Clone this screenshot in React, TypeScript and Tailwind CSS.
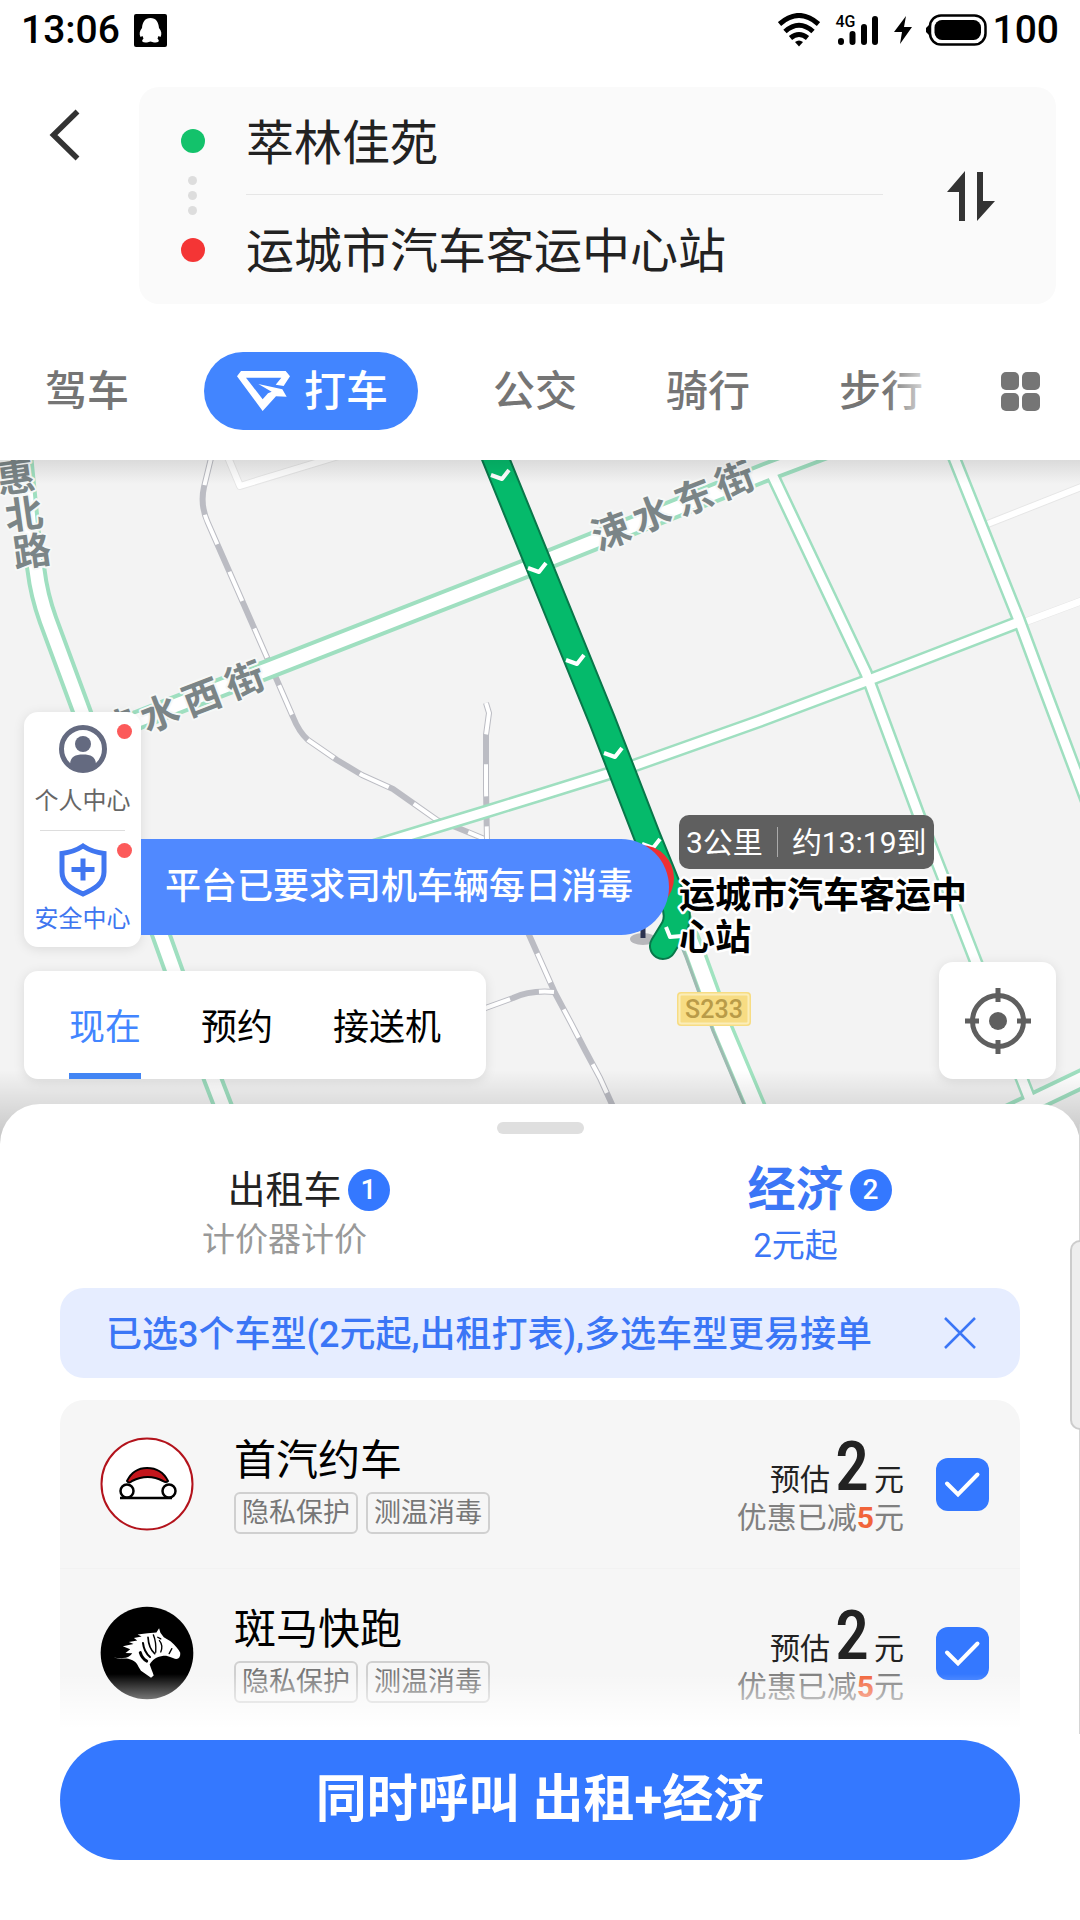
import React, { useState } from "react";

const travelModes = ["驾车", "打车", "公交", "骑行", "步行"];
const timeModes = ["现在", "预约", "接送机"];

// Route arrows painted on top of the green line
const routeArrows = [
  [500, 19],
  [537, 112],
  [575, 204],
  [613, 297],
  [651, 388],
];

const railPaths = [
  "M212 -6L204 27C201 40 203 52 208 63L255 170L276 218L293 257Q299 272 308 280L337 300L362 315L393 329L437 360L458 368L487 380",
  "M486 243L489 253L486 275L486 330L487 380",
  "M487 380L530 477L555 533L571 563L585 590L600 618L630 684",
  "M480 550L513 538Q530 530 554 532",
];

const mainRoads = [
  "M22 -10L30 70L36 110Q39 135 48 160L82 252L161 475L213 620L240 690",
  "M90 280L138 260L269 209L527 108L764 13L830 -12",
  "M996 660L1090 615",
];

const sideRoads = [
  "M770 10L866 213L918 353L943 417L976 502L1034 650",
  "M953 -5L1019 160L1045 230L1092 355",
  "M360 390L485 352L540 335L633 306L760 261L869 220L1019 162",
];

const routePath = "M488 -20L602 260L647 376L673 440Q680 456 674 468L663 486";

function WifiIcon() {
  return (
    <svg width="42" height="34" viewBox="0 0 42 34" fill="none" stroke="black" strokeWidth="5">
      <path d="M1.500 11Q21 -6 40.500 11" />
      <path d="M7 18.500Q21 6 35 18.500" />
      <path d="M12.500 25Q21 18 29.500 25" />
      <path d="M17 29Q21 26 25 29L21 33.500Z" fill="black" stroke="none" />
    </svg>
  );
}

function StatusBar() {
  return (
    <div className="flex h-[60px] items-center justify-between pl-[21px] pr-[21px] text-[39px] font-medium leading-none text-black">
      <div className="flex items-center gap-[14px]">
        <span>13:06</span>
        <svg width="33" height="33" viewBox="0 0 33 33">
          <rect width="33" height="33" rx="2" />
          <path
            d="M16.500 4C22 4 24.500 8 25 14C27.500 17 28 20 26.500 23L24.500 22L23.500 24.500C26 27 25 28.500 20 28.500L16.500 27.500L13 28.500C8 28.500 7 27 9.500 24.500L8.500 22L6.500 23C5 20 5.500 17 8 14C8.500 8 11 4 16.500 4Z"
            fill="white"
          />
        </svg>
      </div>
      <div className="flex items-center">
        <WifiIcon />
        <div className="relative ml-4">
          <span className="absolute left-0 top-0 text-base leading-none">4G</span>
          <svg width="44" height="32" viewBox="0 0 44 32" stroke="black" strokeWidth="6" strokeLinecap="round">
            <path d="M5 27V28M16.500 20V28M28 13V28M39 5V28" />
          </svg>
        </div>
        <svg className="ml-3" width="22" height="28" viewBox="0 0 22 28">
          <path d="M14 0L2 16H10L8 28L20 11H12Z" />
        </svg>
        <svg className="ml-3" width="61" height="32" viewBox="0 0 61 32">
          <rect x="4" y="1.500" width="55.500" height="29" rx="11" fill="none" stroke="black" strokeWidth="2.500" />
          <rect x="8.500" y="6" width="46.500" height="20" rx="7.500" />
          <path d="M3 11V21L0 18V14Z" />
        </svg>
        <span className="ml-[6px]">100</span>
      </div>
    </div>
  );
}

function RouteHeader() {
  return (
    <div className="flex items-start pr-6 pt-[27px]">
      <button type="button" aria-label="返回" className="flex w-[139px] justify-start pl-[49px] pt-[22px]">
        <svg width="32" height="52" viewBox="0 0 32 52" fill="none" stroke="#333" strokeWidth="5.500">
          <path d="M28.500 2.500L4.500 26L28.500 49.500" />
        </svg>
      </button>
      <div className="flex flex-1 items-center rounded-[20px] bg-[#fafafa] pr-[61px] text-[48px] text-[#222]">
        <div className="flex w-[107px] flex-col items-center gap-3">
          <span className="size-6 rounded-full bg-[#13c26b]" />
          <div className="flex h-[61px] flex-col justify-center gap-[6px]">
            <span className="size-[9px] rounded-full bg-[#ddd]" />
            <span className="size-[9px] rounded-full bg-[#ddd]" />
            <span className="size-[9px] rounded-full bg-[#ddd]" />
          </div>
          <span className="size-6 rounded-full bg-[#f43535]" />
        </div>
        <div className="flex-1 divide-y divide-[#e6e6e6]">
          <p className="h-[108px] leading-[114px]">萃林佳苑</p>
          <p className="h-[109px] leading-[114px]">运城市汽车客运中心站</p>
        </div>
        <button type="button" aria-label="交换起终点" className="ml-16">
          <svg width="48" height="50" viewBox="0 0 48 50" fill="#333">
            <path d="M18 0V50H12V21H0Z" />
            <path d="M30 50V1H36V30H48Z" />
          </svg>
        </button>
      </div>
    </div>
  );
}

function TravelTabs() {
  const [mode, setMode] = useState("打车");

  return (
    <div className="flex items-center justify-between pb-[30px] pr-10 pt-12 text-[42px] font-medium text-[#757575]">
      <nav className="relative flex h-[78px] items-center gap-[89px] overflow-hidden pl-[45px]">
        {travelModes.map((name) =>
          name === mode ? (
            <button
              key={name}
              type="button"
              className="-mx-[14px] flex h-[78px] shrink-0 items-center gap-[14px] rounded-full bg-[#4285ff] pl-[33px] pr-[30px] text-white"
            >
              <svg width="53" height="40" viewBox="24 27 159 120" fill="white">
                <path d="M36 27H170L183 43L164 72L140 68L157 47H51L101 112L117 94L128 89L88 66L160 82L173 104L141 103L101 147L24 43Z" />
              </svg>
              {name}
            </button>
          ) : (
            <button key={name} type="button" className="shrink-0" onClick={() => setMode(name)}>
              {name}
            </button>
          )
        )}
        <div className="absolute right-0 h-full w-9 bg-linear-to-l from-white/70 to-white/0" />
      </nav>
      <button type="button" aria-label="更多" className="grid grid-cols-2 gap-[3px]">
        <span className="size-[18px] rounded-[5px] bg-[#757575]" />
        <span className="size-[18px] rounded-[5px] bg-[#757575]" />
        <span className="size-[18px] rounded-[5px] bg-[#757575]" />
        <span className="size-[18px] rounded-[5px] bg-[#757575]" />
      </button>
    </div>
  );
}

function RoadLabel({ x, y, angle, children }: { x: number; y: number; angle: number; children: string }) {
  return (
    <text
      x={x}
      y={y}
      transform={`rotate(${angle} ${x} ${y})`}
      textAnchor="middle"
      dominantBaseline="central"
      fontSize="38"
      fontWeight="700"
      fill="#7b8587"
      stroke="#f6f8f7"
      strokeWidth="4"
      paintOrder="stroke"
    >
      {children}
    </text>
  );
}

function MapCanvas() {
  return (
    <svg
      className="absolute inset-0 h-full w-full"
      viewBox="0 0 1080 684"
      preserveAspectRatio="xMidYMin slice"
      fill="none"
      strokeLinejoin="round"
    >
      <rect width="1080" height="684" fill="#f3f3f3" />

      {/* minor roads */}
      <g stroke="#e6e6e6" strokeWidth="8">
        <path d="M227 -5L240 26L345 -6M985 65L1084 26M1025 162L1084 140" />
      </g>
      <g stroke="white">
        <path d="M227 -5L240 26L345 -6M985 65L1084 26" strokeWidth="6" />
        <path d="M1025 162L1084 140" strokeWidth="7" />
      </g>

      {/* railway */}
      {railPaths.map((d) => (
        <g key={d}>
          <path d={d} stroke="#bbbcc3" strokeWidth="6" />
          <path d={d} stroke="white" strokeWidth="4" strokeDasharray="32 30" />
        </g>
      ))}

      {/* green roads */}
      {mainRoads.map((d) => (
        <path key={d} d={d} stroke="#9fdfc0" strokeWidth="21" />
      ))}
      {sideRoads.map((d) => (
        <path key={d} d={d} stroke="#9fdfc0" strokeWidth="14" />
      ))}
      <path d="M655 396L695 493L722 567L754 643L771 684" stroke="#a0e3c0" strokeWidth="22" />
      <path d="M646 400L686 497L713 571L745 647L762 688" stroke="#9dbbb1" strokeWidth="3" />
      {mainRoads.map((d) => (
        <path key={d} d={d} stroke="white" strokeWidth="13" />
      ))}
      {sideRoads.map((d) => (
        <path key={d} d={d} stroke="white" strokeWidth="9" />
      ))}
      <path d="M655 396L695 493L722 567L754 643L771 684" stroke="white" strokeWidth="15" />

      <RoadLabel x={16} y={18} angle={-8}>惠</RoadLabel>
      <RoadLabel x={24} y={55} angle={-8}>北</RoadLabel>
      <RoadLabel x={32} y={92} angle={-8}>路</RoadLabel>
      <RoadLabel x={118} y={269} angle={-21}>涑</RoadLabel>
      <RoadLabel x={160} y={254} angle={-21}>水</RoadLabel>
      <RoadLabel x={202} y={238} angle={-21}>西</RoadLabel>
      <RoadLabel x={245} y={221} angle={-21}>街</RoadLabel>
      <RoadLabel x={611} y={72} angle={-21}>涑</RoadLabel>
      <RoadLabel x={652} y={55} angle={-21}>水</RoadLabel>
      <RoadLabel x={694} y={38} angle={-21}>东</RoadLabel>
      <RoadLabel x={735} y={21} angle={-21}>街</RoadLabel>

      {/* destination pin, mostly behind the notice */}
      <ellipse cx="643" cy="479" rx="13" ry="6" fill="#b7b7bb" />
      <path d="M643 460V478" stroke="#2c3350" strokeWidth="5" />

      {/* route */}
      <g strokeLinecap="round">
        <path d={routePath} stroke="#08784a" strokeWidth="28" />
        <path d={routePath} stroke="#05ba6b" strokeWidth="24" />
      </g>
      <g stroke="white" strokeWidth="4">
        {routeArrows.map(([x, y]) => (
          <path key={y} d={`M${x - 9} ${y - 4}L${x + 2} ${y}L${x + 9} ${y - 9}`} />
        ))}
        <path d="M666 467L670 477L682 476" />
      </g>
      <circle cx="641" cy="418" r="33" fill="#ee2f33" />

      {/* road shield */}
      <rect x="677" y="532" width="74" height="34" rx="4" fill="#f7dc83" />
      <rect x="679.500" y="534.500" width="69" height="29" rx="2" stroke="#fbedb9" strokeWidth="2" />
      <text x="714" y="549" textAnchor="middle" dominantBaseline="central" fontSize="25" fontWeight="500" fill="#b99b48">
        S233
      </text>

      {/* destination name */}
      <g fontSize="36" fontWeight="700" fill="black" stroke="white" strokeWidth="5" paintOrder="stroke">
        <text x="679" y="448">运城市汽车客运中</text>
        <text x="679" y="490">心站</text>
      </g>
    </svg>
  );
}

function MapSection() {
  const [time, setTime] = useState("现在");

  return (
    <section className="relative h-[684px] overflow-hidden">
      <MapCanvas />
      <div className="absolute inset-x-0 top-0 h-6 bg-linear-to-b from-black/10 to-black/0" />
      <div className="absolute inset-x-0 bottom-0 h-[74px] bg-linear-to-t from-black/20 to-black/0" />

      {/* arrival estimate */}
      <div className="absolute left-[679px] top-[355px] flex h-[54px] items-center rounded-[10px] bg-[#5f5f5f] px-[7px] text-[30px] text-white">
        <span>3公里</span>
        <span className="mx-[14px] h-[30px] w-px bg-[#aaa]" />
        <span>约13:19到</span>
      </div>

      <div className="relative flex items-start px-6 pt-[252px]">
        <div className="h-[235px] w-[117px] rounded-[14px] bg-white px-2 shadow-[0_2px_12px_rgba(0,0,0,0.1)]">
          <button type="button" className="relative flex h-[118px] w-full flex-col items-center gap-4 pt-[13px] text-2xl leading-6 text-[#666]">
            <svg width="48" height="48" viewBox="0 0 48 48">
              <circle cx="24" cy="24" r="21.500" fill="white" stroke="#646a80" strokeWidth="5" />
              <circle cx="24" cy="19" r="8" fill="#646a80" />
              <path d="M11 40C11 32 16 29.500 24 29.500C32 29.500 37 32 37 40Q32 46.500 24 46.500Q16 46.500 11 40Z" fill="#646a80" />
            </svg>
            <span className="whitespace-nowrap">个人中心</span>
            <i className="absolute right-px top-3 size-[15px] rounded-full bg-[#fc5a5a]" />
          </button>
          <div className="mx-2 h-px bg-[#ddd]" />
          <button type="button" className="relative flex w-full flex-col items-center gap-[10px] pt-3 text-2xl leading-6 text-[#4076f0]">
            <svg width="48" height="54" viewBox="0 0 48 54" fill="none" stroke="#4076f0">
              <path d="M24 3Q33 9 45 10.500V29C45 41 35 46 24 51C13 46 3 41 3 29V10.500Q15 9 24 3Z" strokeWidth="5" />
              <path d="M24 15.500V37.500M12.500 26.500H35.500" strokeWidth="5" />
            </svg>
            <span className="whitespace-nowrap">安全中心</span>
            <i className="absolute right-px top-3 size-[15px] rounded-full bg-[#fc5a5a]" />
          </button>
        </div>
        <p className="mt-[127px] h-24 rounded-r-full bg-[#5089ff] pl-6 pr-9 text-[36px] font-medium leading-24 text-white">
          平台已要求司机车辆每日消毒
        </p>
      </div>

      <div className="relative flex items-end justify-between px-6 pt-[15px]">
        <div className="flex h-[108px] gap-[60px] rounded-[14px] bg-white px-[45px] text-[36px] text-black shadow-[0_2px_12px_rgba(0,0,0,0.1)]">
          {timeModes.map((name) => (
            <button
              key={name}
              type="button"
              onClick={() => setTime(name)}
              className={`border-b-[6px] pt-3 ${
                name === time ? "border-[#4285f4] text-[#4285ff]" : "border-transparent"
              }`}
            >
              {name}
            </button>
          ))}
        </div>
        <button
          type="button"
          aria-label="定位"
          className="flex size-[117px] items-center justify-center rounded-[14px] bg-white shadow-[0_2px_12px_rgba(0,0,0,0.1)]"
        >
          <svg width="66" height="66" viewBox="0 0 66 66" fill="none" stroke="#5f5f5f" strokeWidth="5">
            <circle cx="33" cy="33" r="25.500" />
            <circle cx="33" cy="33" r="9" fill="#5f5f5f" stroke="none" />
            <path d="M33 0V14M33 52V66M0 33H14M52 33H66" />
          </svg>
        </button>
      </div>
    </section>
  );
}

function CountBadge({ count }: { count: number }) {
  return (
    <span className="absolute left-full ml-[6px] flex size-[42px] items-center justify-center rounded-full bg-[#3478ff] text-[28px] font-medium leading-none text-white">
      {count}
    </span>
  );
}

function ShouqiLogo() {
  return (
    <svg className="size-[94px] shrink-0" viewBox="0 0 94 94">
      <circle cx="47" cy="47" r="45.500" fill="white" stroke="#b3131c" strokeWidth="2" />
      <path d="M27 44C32 34 40 31 47 31C54 31 63 34 68 44Q66 46 63 44Q48 36 32 44Q29 47 27 44Z" fill="#c4161c" stroke="black" strokeWidth="2" />
      <path d="M20 61H72" stroke="black" strokeWidth="2.500" />
      <g fill="white" stroke="black" strokeWidth="2.500">
        <circle cx="27" cy="54" r="6.500" />
        <circle cx="69" cy="54" r="6.500" />
      </g>
    </svg>
  );
}

function ZebraLogo() {
  return (
    <svg className="size-[94px] shrink-0" viewBox="16 18 280 280">
      <circle cx="156" cy="158" r="138" />
      <path
        d="M57 170C72 179 86 172 100 175C120 180 128 190 131 200L138 211L168 232L176 225C172 212 168 204 164 192C172 178 186 168 205 166C222 165 232 174 243 176C252 175 256 168 255 157C250 146 240 136 226 123L206 111L196 98L192 84L184 97Q160 98 128 103L140 109L117 113L127 121L102 125L116 131L84 138L106 147L92 158L112 159Q104 173 84 173Q68 175 57 170Z"
        fill="white"
      />
      <g stroke="black" fill="none" strokeLinecap="round">
        <path d="M136 157Q141 174 155 182" strokeWidth="9" />
        <path d="M144 128Q147 155 165 170" strokeWidth="6" />
        <path d="M159 111Q161 144 179 160" strokeWidth="5" />
        <path d="M175 104Q184 125 182 156" strokeWidth="4" />
        <path d="M193 121Q205 135 197 155" strokeWidth="4" />
        <path d="M188 111L197 116M230 145L222 160" strokeWidth="4" />
      </g>
    </svg>
  );
}

const services = [
  { name: "首汽约车", price: 2, discount: 5, tags: ["隐私保护", "测温消毒"], logo: <ShouqiLogo /> },
  { name: "斑马快跑", price: 2, discount: 5, tags: ["隐私保护", "测温消毒"], logo: <ZebraLogo /> },
];

function ServiceRow({ service }: { service: (typeof services)[number] }) {
  return (
    <label className="flex h-[169px] items-center border-b border-[#f2f2f2] pl-10 pr-[31px]">
      {service.logo}
      <div className="ml-10 flex-1">
        <h3 className="h-12 text-[42px] leading-[52px] text-black">{service.name}</h3>
        <div className="mt-[9px] flex gap-2">
          {service.tags.map((tag) => (
            <span key={tag} className="h-[42px] rounded-[6px] border-2 border-[#d0d0d0] px-[6px] text-[27px] leading-[39px] text-[#777]">
              {tag}
            </span>
          ))}
        </div>
      </div>
      <div className="text-right text-[30px]">
        <p className="h-[62px] leading-[58px] text-[#222]">
          预估
          <span className="mx-[5px] font-['Roboto_Condensed','Liberation_Sans_Narrow','Roboto'] text-[68px] font-medium leading-none">
            {service.price}
          </span>
          元
        </p>
        <p className="mt-[5px] leading-9 text-[#808080]">
          优惠已减<b className="font-bold text-[#f1643a]">{service.discount}</b>元
        </p>
      </div>
      <span className="relative ml-8 size-[53px]">
        <input type="checkbox" defaultChecked className="peer size-full appearance-none rounded-[12px] border-2 border-[#ccc] checked:border-0 checked:bg-[#3478ff]" />
        <svg
          className="pointer-events-none absolute inset-0 hidden size-full peer-checked:block"
          viewBox="0 0 53 53"
          fill="none"
          stroke="white"
          strokeWidth="4"
          strokeLinecap="round"
        >
          <path d="M11 25.500L22 36.500L41.500 16.500" />
        </svg>
      </span>
    </label>
  );
}

function BottomSheet() {
  const [tipOpen, setTipOpen] = useState(true);

  return (
    <section className="relative -mt-10 rounded-t-[40px] bg-white pt-[18px]">
      <div className="mx-auto h-3 w-[87px] rounded-full bg-[#dfdfdf]" />

      <div className="grid grid-cols-2 px-[29px] pt-7 text-center">
        <button type="button" className="flex flex-col items-center">
          <span className="relative flex h-14 items-center text-[38px] text-[#222]">
            出租车
            <CountBadge count={1} />
          </span>
          <span className="text-[33px] leading-[44px] text-[#999]">计价器计价</span>
        </button>
        <button type="button" className="flex flex-col items-center text-[#3b76f6]">
          <span className="relative flex h-14 items-center text-[48px] font-bold">
            经济
            <CountBadge count={2} />
          </span>
          <span className="pt-[5px] text-[33px] leading-[46px]">2元起</span>
        </button>
      </div>

      <div className="px-[60px] pt-[19px]">
        {tipOpen && (
          <div className="flex h-[90px] items-center justify-between rounded-[24px] bg-[#e6edff] pl-[46px] pr-[43px] text-[36px] font-medium text-[#3b76f6]">
            <p className="pt-[3px]">已选3个车型(2元起,出租打表),多选车型更易接单</p>
            <button type="button" aria-label="关闭" onClick={() => setTipOpen(false)}>
              <svg width="34" height="34" viewBox="0 0 34 34" stroke="#3b76f6" strokeWidth="2.500">
                <path d="M2 2L32 32M32 2L2 32" />
              </svg>
            </button>
          </div>
        )}

        <div className="relative mt-[22px] rounded-t-[24px] bg-[#f6f6f6]">
          {services.map((service) => (
            <ServiceRow key={service.name} service={service} />
          ))}
          <div className="pointer-events-none absolute inset-x-0 bottom-0 h-16 bg-linear-to-t from-white from-15% to-white/0" />
        </div>
      </div>

      <div className="px-[60px] pb-[60px] pt-[2px]">
        <button type="button" className="h-[120px] w-full rounded-full bg-[#3478ff] text-[51px] font-bold text-white">
          同时呼叫 出租+经济
        </button>
      </div>

      {/* edge of the side drawer */}
      <div className="absolute right-0 top-5 h-[610px] w-px bg-[#d5d5d5]" />
      <div className="absolute right-0 top-[136px] h-[190px] w-[10px] rounded-l-[10px] border-2 border-r-0 border-[#ccc] bg-[#eee]" />
    </section>
  );
}

export default function App() {
  return (
    <main className="min-h-screen overflow-hidden bg-white font-['Roboto','Noto_Sans_CJK_SC',sans-serif]">
      <StatusBar />
      <RouteHeader />
      <TravelTabs />
      <MapSection />
      <BottomSheet />
    </main>
  );
}
